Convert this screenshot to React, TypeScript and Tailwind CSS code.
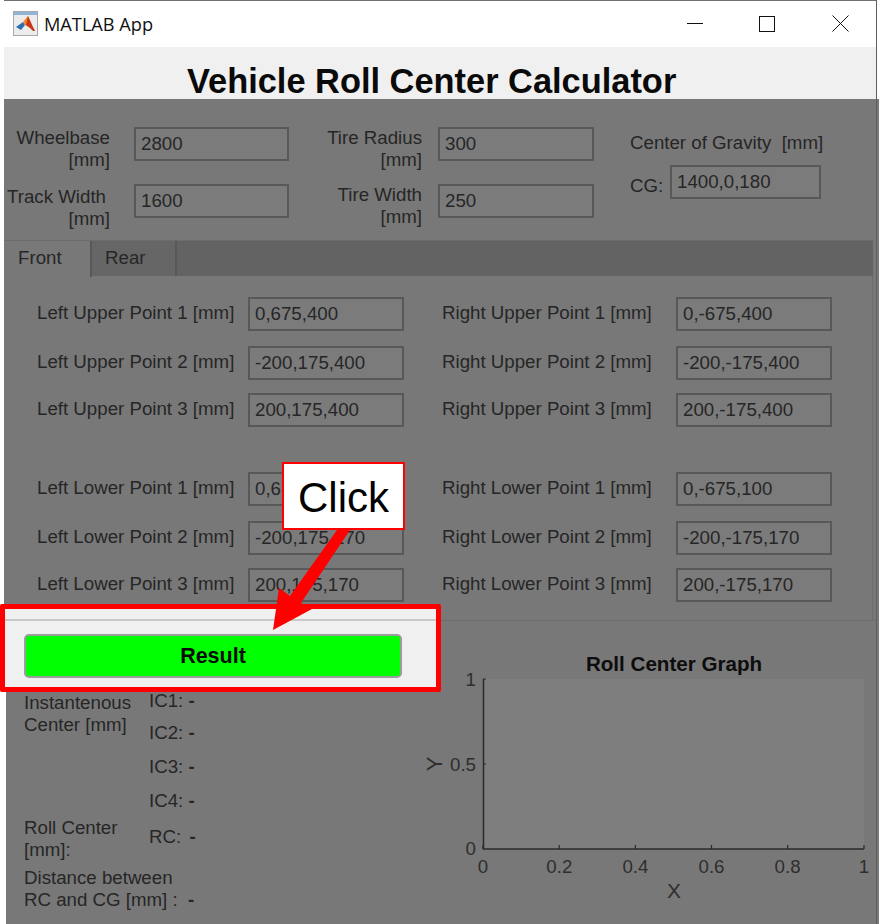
const upperLower = [
  { left: "Left Upper Point 1 [mm]", leftValue: "0,675,400", right: "Right Upper Point 1 [mm]", rightValue: "0,-675,400", gap: "mt-0" },
  { left: "Left Upper Point 2 [mm]", leftValue: "-200,175,400", right: "Right Upper Point 2 [mm]", rightValue: "-200,-175,400", gap: "mt-[15px]" },
  { left: "Left Upper Point 3 [mm]", leftValue: "200,175,400", right: "Right Upper Point 3 [mm]", rightValue: "200,-175,400", gap: "mt-[13px]" },
  { left: "Left Lower Point 1 [mm]", leftValue: "0,675,100", right: "Right Lower Point 1 [mm]", rightValue: "0,-675,100", gap: "mt-[45px]" },
  { left: "Left Lower Point 2 [mm]", leftValue: "-200,175,170", right: "Right Lower Point 2 [mm]", rightValue: "-200,-175,170", gap: "mt-[15px]" },
  { left: "Left Lower Point 3 [mm]", leftValue: "200,175,170", right: "Right Lower Point 3 [mm]", rightValue: "200,-175,170", gap: "mt-[13px]" },
];

function Field({ value, width }: { value: string; width: string }) {
  return (
    <div className={`${width} h-[34px] shrink-0 border-2 border-[#585858] bg-[#7b7b7b] pl-[5px] leading-[29px] text-[18.7px] text-[#262626]`}>
      {value}
    </div>
  );
}

function Logo() {
  return (
    <svg width="25" height="25" viewBox="0 0 25 25" className="shrink-0">
      <rect x="0.5" y="0.5" width="24" height="24" fill="#ececec" stroke="#a9a9a9" />
      <rect x="1" y="1" width="23" height="3" fill="#8fb4d8" />
      <path d="M3 16 L10 11 L12 14 L8 19 Z" fill="#2f6fb0" />
      <path d="M10 11 L15 5 L19 14 L22 20 L17 17 L12 14 Z" fill="#f08a24" />
      <path d="M15 5 L13 14 L16 16 L20 20 L22 20 L19 14 Z" fill="#c9341c" />
    </svg>
  );
}

function Graph() {
  const ticks = [
    { x: 483, label: "0" },
    { x: 559.3, label: "0.2" },
    { x: 635.4, label: "0.4" },
    { x: 711.5, label: "0.6" },
    { x: 787.6, label: "0.8" },
    { x: 864, label: "1" },
  ];
  return (
    <svg width="459" height="304" viewBox="420 620 459 304" className="block shrink-0" fontFamily="'Liberation Sans', Arial, sans-serif">
      <text x="674" y="670" textAnchor="middle" fontSize="20.6" fontWeight="700" fill="#0d0d0d">Roll Center Graph</text>
      <rect x="483" y="678" width="381" height="170" fill="#7e7e7e" />
      <path d="M483.5 678 V848 H864" fill="none" stroke="#2b2b2b" strokeWidth="1.5" />
      <path d="M483 678 H486 M483 763 H486" stroke="#2b2b2b" strokeWidth="1.2" />
      {ticks.map((t) => (
        <g key={t.label}>
          <path d={`M${t.x} 848 V844`} stroke="#2b2b2b" strokeWidth="1.2" />
          <text x={t.x} y="872" textAnchor="middle" fontSize="18.7" fill="#2e2e2e">{t.label}</text>
        </g>
      ))}
      <text x="476" y="685" textAnchor="end" fontSize="18.7" fill="#2e2e2e">1</text>
      <text x="476" y="770" textAnchor="end" fontSize="18.7" fill="#2e2e2e">0.5</text>
      <text x="476" y="854" textAnchor="end" fontSize="18.7" fill="#2e2e2e">0</text>
      <text x="674" y="897" textAnchor="middle" fontSize="21" fill="#2e2e2e">X</text>
      <text x="0" y="0" transform="translate(442 763) rotate(-90)" textAnchor="middle" fontSize="22" fill="#2e2e2e">Y</text>
    </svg>
  );
}

export default function App() {
  return (
    <div className="relative flex h-[924px] w-[879px] overflow-hidden bg-white font-['Liberation_Sans',Arial,sans-serif] text-[18.7px] leading-[22px] text-[#262626]">
      <div className="w-[4px] shrink-0 bg-white" />

      {/* Window */}
      <div className="flex w-[872px] shrink-0 flex-col border-t border-[#707070]">
        <div className="flex h-[46px] shrink-0 items-center bg-white pb-[1px] pl-[9px]">
          <Logo />
          <span className="ml-[6px] font-['Open_Sans',sans-serif] text-[18.2px] text-[#111111]">MATLAB App</span>
          <div className="ml-auto flex items-center pr-[27px]">
            <div className="h-[1px] w-[16px] bg-[#111111]" />
            <div className="ml-[56px] h-[16px] w-[16px] border border-[#111111]" />
            <svg width="17" height="17" viewBox="0 0 17 17" className="ml-[57px]">
              <path d="M0.5 0.5 L16.5 16.5 M16.5 0.5 L0.5 16.5" stroke="#111111" strokeWidth="1" />
            </svg>
          </div>
        </div>

        <div className="flex h-[52px] shrink-0 items-end bg-[#f0f0f0] pl-[183px]">
          <h1 className="translate-y-px text-[34.4px] font-bold leading-[37px] text-[#0a0a0a]">Vehicle Roll Center Calculator</h1>
        </div>

        <div className="flex min-h-0 flex-1 flex-col bg-[#787878]">
          {/* Top parameters */}
          <div className="flex h-[141px] shrink-0 pt-[28px]">
            <div className="flex flex-col">
              <div className="flex h-[43px]">
                <div className="w-[106px] text-right"><div>Wheelbase</div><div>[mm]</div></div>
                <Field value="2800" width="ml-[24px] w-[155px]" />
              </div>
              <div className="mt-[14px] flex">
                <div className="mt-[2px] w-[106px] text-right"><div className="whitespace-nowrap pr-[4px]">Track Width</div><div>[mm]</div></div>
                <Field value="1600" width="ml-[24px] w-[155px]" />
              </div>
            </div>

            <div className="ml-[30px] flex flex-col">
              <div className="flex h-[43px]">
                <div className="w-[103px] text-right"><div>Tire Radius</div><div>[mm]</div></div>
                <Field value="300" width="ml-[16px] w-[156px]" />
              </div>
              <div className="mt-[14px] flex">
                <div className="w-[103px] text-right"><div>Tire Width</div><div>[mm]</div></div>
                <Field value="250" width="ml-[16px] w-[156px]" />
              </div>
            </div>

            <div className="ml-[36px] flex flex-col pt-[4px]">
              <div className="mt-[1px]">Center of Gravity&nbsp; [mm]</div>
              <div className="mt-[12px] flex">
                <div className="mt-[9px] w-[40px]">CG:</div>
                <Field value="1400,0,180" width="-mt-[1px] w-[151px]" />
              </div>
            </div>
          </div>

          {/* Tabs */}
          <div className="mr-[3px] flex h-[36px] shrink-0 border-t border-[#6c6c6c] bg-[#636363]">
            <div className="h-[36px] w-[88px] border-r-2 border-[#585858] bg-[#787878] pl-[14px] leading-[33px]">Front</div>
            <div className="w-[85px] border-r-2 border-[#585858] bg-[#666666] pl-[13px] leading-[33px]">Rear</div>
          </div>

          {/* Tab body */}
          <div className="mr-[3px] h-[344px] shrink-0 border-r border-[#6c6c6c] pl-[33px] pt-[21px]">
            {upperLower.map((row) => (
              <div key={row.left} className={`${row.gap} flex items-center`}>
                <div className="w-[211px] shrink-0 -translate-y-px">{row.left}</div>
                <Field value={row.leftValue} width="w-[156px]" />
                <div className="ml-[38px] w-[234px] shrink-0 -translate-y-px">{row.right}</div>
                <Field value={row.rightValue} width="w-[156px]" />
              </div>
            ))}
          </div>

          {/* Results + graph */}
          <div className="flex min-h-0 flex-1 border-t border-[#6c6c6c]">
            <div className="w-[416px] shrink-0">
              <div className="relative z-10 -mt-[17px] ml-[-4px] h-[88px] w-[441px] rounded-[2px] border-[5px] border-[#ff0000] bg-[#f0f0f0]">
                <div className="mt-[10px] h-[2px] bg-[#c9c9c9]" />
                <button className="ml-[19px] mt-[13px] block h-[44px] w-[378px] rounded-[5px] border-2 border-[#9c9c9c] bg-[#00ff00] text-[21.5px] font-bold text-[#0a0a0a]">
                  Result
                </button>
              </div>

              <div className="h-[232px] border-l-2 border-white pl-[18px]">
                <div className="flex">
                  <div className="w-[125px] shrink-0">
                    <div>Instantenous</div>
                    <div>Center [mm]</div>
                  </div>
                  <div className="-mt-[2px] flex flex-col">
                    <div>IC1: <span className="font-bold">-</span></div>
                    <div className="mt-[10px]">IC2: <span className="font-bold">-</span></div>
                    <div className="mt-[12px]">IC3: <span className="font-bold">-</span></div>
                    <div className="mt-[12px]">IC4: <span className="font-bold">-</span></div>
                  </div>
                </div>
                <div className="mt-[5px] flex">
                  <div className="w-[125px] shrink-0">
                    <div>Roll Center</div>
                    <div>[mm]:</div>
                  </div>
                  <div className="mt-[9px]">RC: <span className="ml-[3px] font-bold">-</span></div>
                </div>
                <div className="mt-[6px] flex items-end">
                  <div className="w-[164px] shrink-0 whitespace-nowrap">
                    <div>Distance between</div>
                    <div>RC and CG [mm] :</div>
                  </div>
                  <span className="font-bold">-</span>
                </div>
              </div>
            </div>
            <Graph />
          </div>
        </div>
      </div>

      <div className="w-px shrink-0 bg-[#5f5f5f]" />
      <div className="flex w-[2px] shrink-0 flex-col">
        <div className="h-[99px] bg-white" />
        <div className="flex-1 bg-[#787878]" />
      </div>

      {/* Annotation over the app */}
      <div className="absolute left-[282px] top-[462px] z-20 flex h-[68px] w-[123px] items-center justify-center border-2 border-[#ff0000] bg-white pt-[4px] text-[42px] text-black">
        Click
      </div>
      <svg width="879" height="924" viewBox="0 0 879 924" className="pointer-events-none absolute left-0 top-0 z-20">
        <polygon points="337,530 350,530 301,603 312,609 273,630 279,588 290,596" fill="#ff0000" />
      </svg>
    </div>
  );
}
